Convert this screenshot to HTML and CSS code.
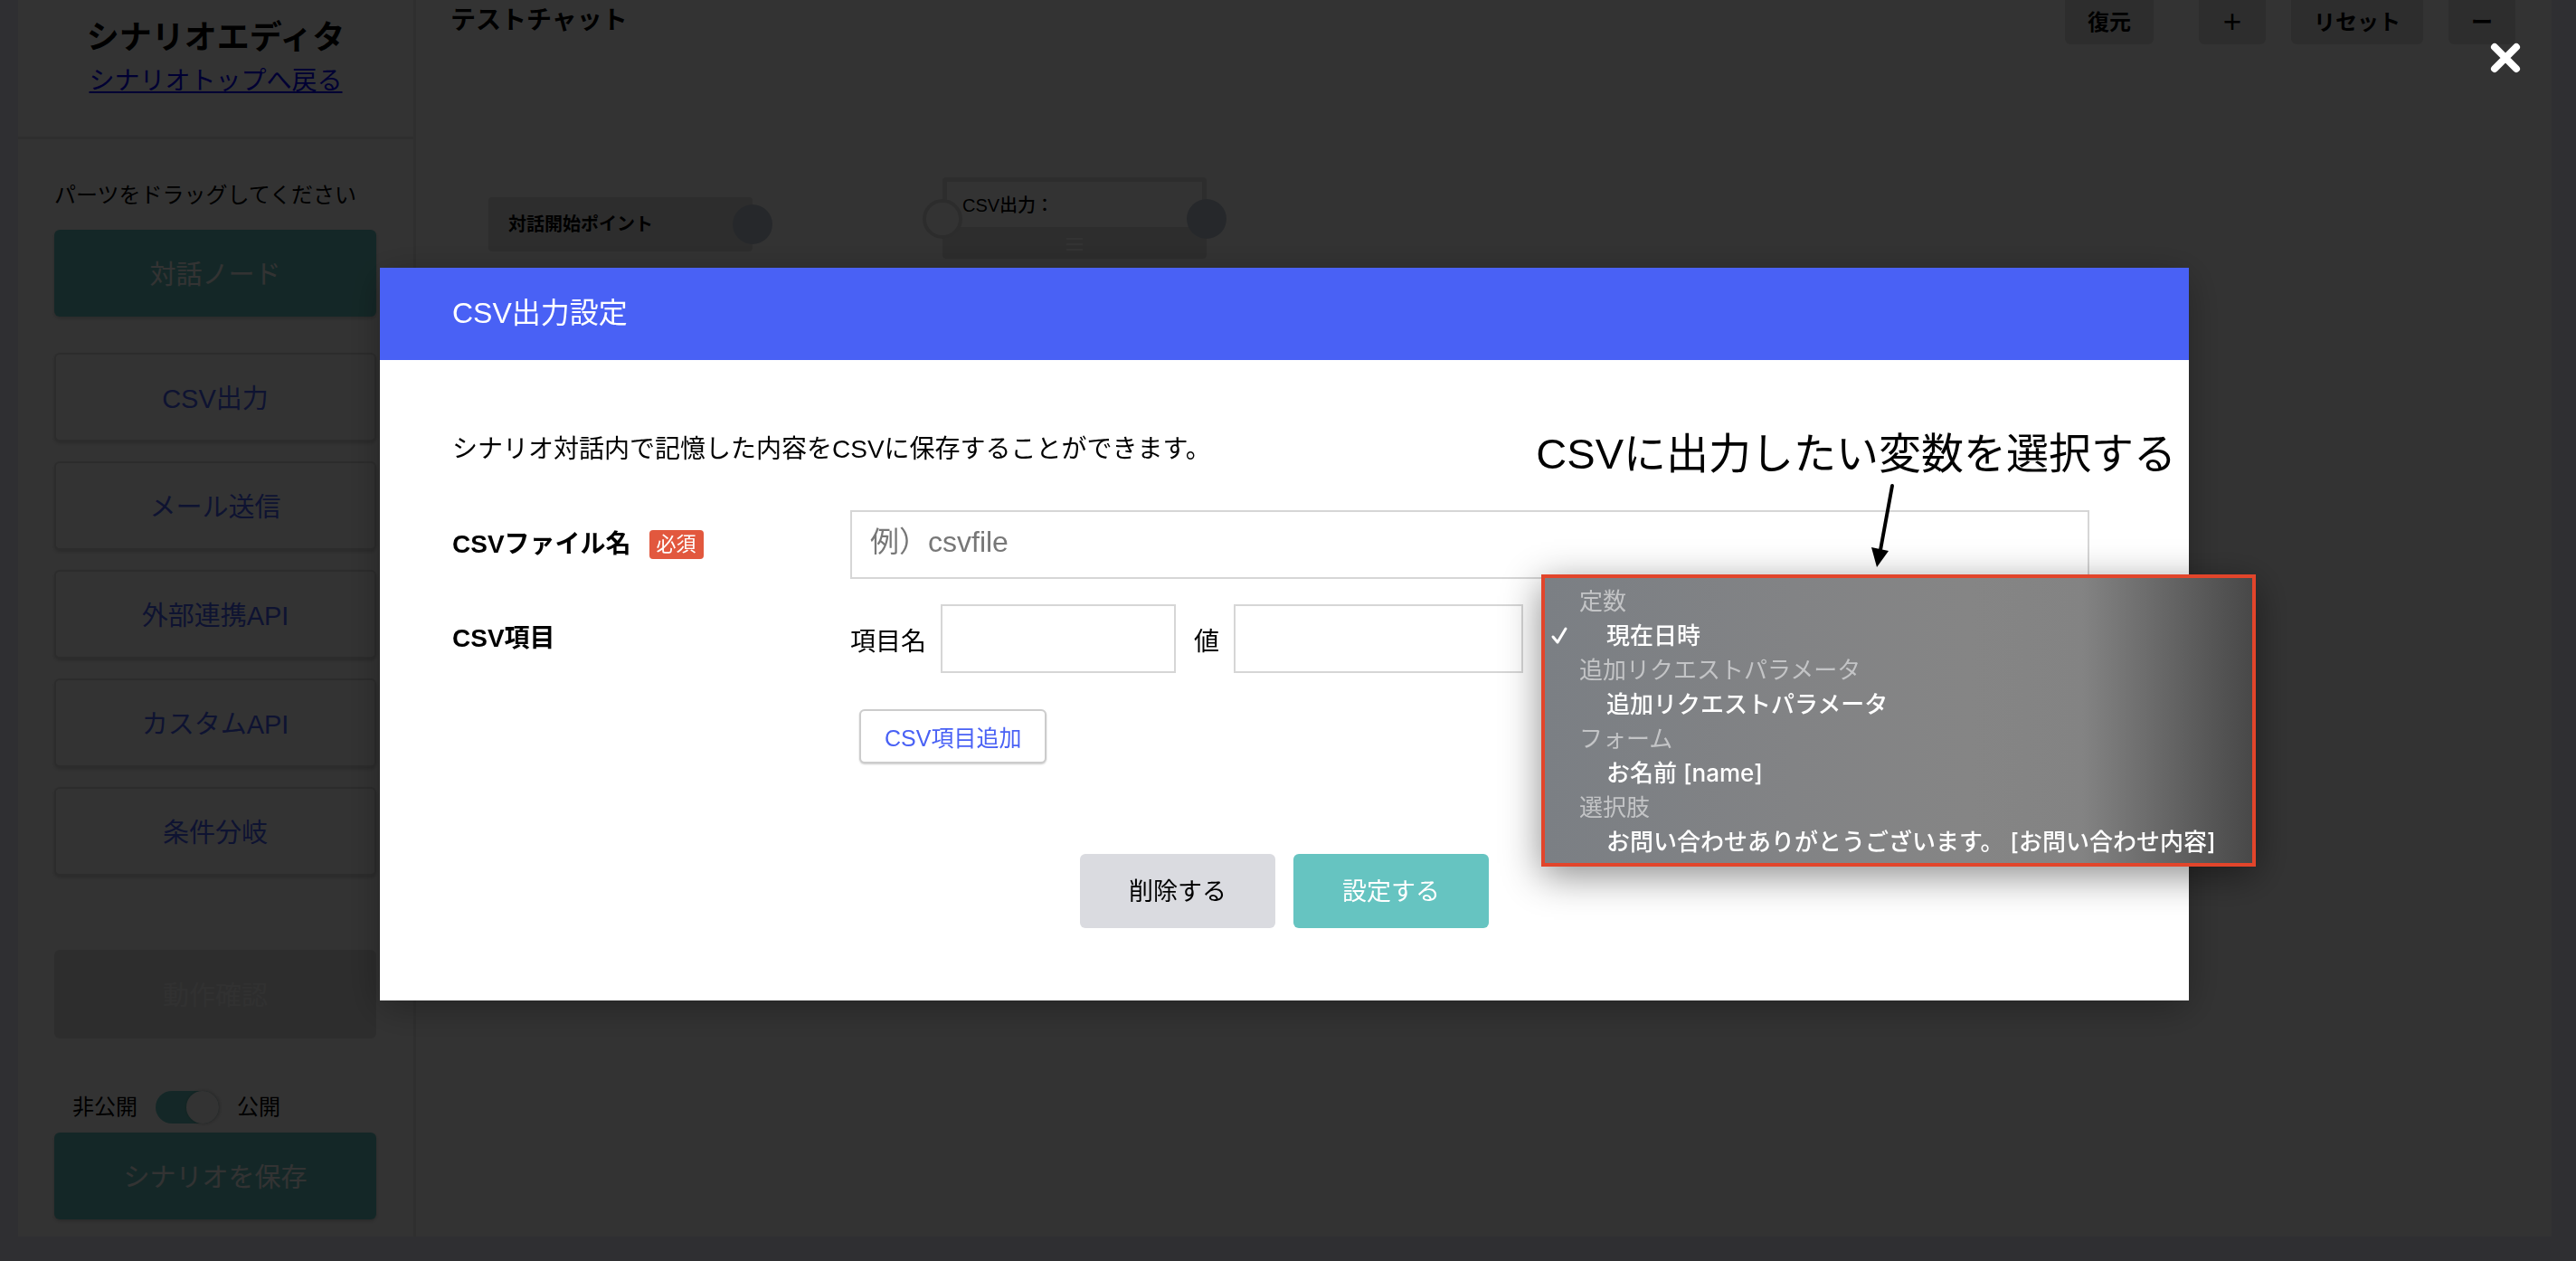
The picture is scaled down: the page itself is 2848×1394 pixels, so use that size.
FILE: index.html
```html
<!DOCTYPE html>
<html lang="ja">
<head>
<meta charset="utf-8">
<meta name="viewport" content="width=device-width, initial-scale=1">
<title>シナリオエディタ</title>
<link rel="stylesheet" href="styles.css">
</head>
<body>
<div class="app">
  <aside class="sidebar">
    <header class="sidebar-head">
      <h1 class="sidebar-title">シナリオエディタ</h1>
      <a class="sidebar-link" href="#">シナリオトップへ戻る</a>
    </header>
    <div class="sidebar-body">
      <p class="hint">パーツをドラッグしてください</p>
      <button class="part part-primary" type="button">対話ノード</button>
      <div class="part-list">
        <button class="part" type="button">CSV出力</button>
        <button class="part" type="button">メール送信</button>
        <button class="part" type="button">外部連携API</button>
        <button class="part" type="button">カスタムAPI</button>
        <button class="part" type="button">条件分岐</button>
      </div>
      <button class="part part-disabled" type="button" disabled>動作確認</button>
      <label class="publish">
        <span>非公開</span>
        <input class="switch" type="checkbox" checked>
        <span>公開</span>
      </label>
      <button class="part part-primary part-save" type="button">シナリオを保存</button>
    </div>
  </aside>
  <main class="workspace">
    <div class="toolbar">
      <h2 class="chat-name">テストチャット</h2>
      <div class="tools">
        <button class="tool tool-restore" type="button">復元</button>
        <button class="tool" type="button">＋</button>
        <button class="tool" type="button">リセット</button>
        <button class="tool" type="button">ー</button>
      </div>
    </div>
    <div class="node node-start">対話開始ポイント<span class="port port-out"></span></div>
    <div class="node node-csv">
      <span class="port port-in"></span>
      <div class="node-text">CSV出力：</div>
      <div class="node-grip">
        <svg width="22" height="18" viewBox="0 0 22 18" aria-hidden="true"><path d="M2 3h18M2 9h18M2 15h18" stroke="#fff" stroke-width="2"/></svg>
      </div>
      <span class="port port-out"></span>
    </div>
  </main>
</div>

<div class="overlay">
  <button class="close" type="button" aria-label="閉じる">
    <svg width="34" height="34" viewBox="0 0 34 34" aria-hidden="true"><path d="M5 5l24 24M29 5L5 29" stroke="#fff" stroke-width="8" stroke-linecap="round"/></svg>
  </button>
  <section class="modal" role="dialog" aria-labelledby="modal-title">
    <h2 class="modal-title" id="modal-title">CSV出力設定</h2>
    <form class="modal-body">
      <p class="lead">シナリオ対話内で記憶した内容をCSVに保存することができます。</p>
      <div class="row">
        <label class="row-label" for="file-name">CSVファイル名 <span class="badge">必須</span></label>
        <input class="text-box file-box" id="file-name" type="text" placeholder="例）csvfile">
      </div>
      <div class="row">
        <span class="row-label">CSV項目</span>
        <div class="item">
          <label class="item-label" for="item-name">項目名</label>
          <input class="text-box name-box" id="item-name" type="text">
          <label class="item-label" for="item-value">値</label>
          <input class="text-box value-box" id="item-value" type="text">
          <div class="picker">
            <select class="menu" size="8" aria-label="変数">
              <optgroup label="定数"><option selected>現在日時</option></optgroup>
              <optgroup label="追加リクエストパラメータ"><option>追加リクエストパラメータ</option></optgroup>
              <optgroup label="フォーム"><option>お名前 [name]</option></optgroup>
              <optgroup label="選択肢"><option>お問い合わせありがとうございます。 [お問い合わせ内容]</option></optgroup>
            </select>
            <svg class="menu-check" width="24" height="22" viewBox="0 0 24 22" aria-hidden="true"><path d="M4 12l5 6L18 3" fill="none" stroke="#fff" stroke-width="3" stroke-linecap="round" stroke-linejoin="round"/></svg>
          </div>
        </div>
      </div>
      <button class="add" type="button">CSV項目追加</button>
      <div class="actions">
        <button class="action" type="button">削除する</button>
        <button class="action action-main" type="submit">設定する</button>
      </div>
    </form>
    <div class="callout">
      <p class="callout-text">CSVに出力したい変数を選択する</p>
      <svg class="callout-arrow" width="40" height="96" viewBox="0 0 40 96" aria-hidden="true"><path d="M27 3L14 74" stroke="#000" stroke-width="4" stroke-linecap="round"/><path d="M4 71l19 4L10 93z"/></svg>
    </div>
  </section>
</div>
</body>
</html>
```
FILE: styles.css
```css
* {
  box-sizing: border-box;
}

body {
  margin: 0;
  background: #ebebf8;
  color: #000;
  font-family: "Liberation Sans", "Noto Sans CJK JP", sans-serif;
  font-size: 24px;
  line-height: 36px;
}

h1, h2, p {
  margin: 0;
}

button, input, select {
  font-family: inherit;
}

/* Editor behind the dialog */
.app {
  display: flex;
  margin: 0 27px 27px 20px;
  background: #fff;
}

.sidebar {
  flex: none;
  width: 440px;
  border-right: 3px solid #ebebeb;
}

.sidebar-head {
  height: 154px;
  padding-top: 18px;
  border-bottom: 3px solid #e6e6e6;
  text-align: center;
}

.sidebar-title {
  font-size: 36px;
  line-height: 48px;
}

.sidebar-link {
  display: inline-block;
  margin-top: 4px;
  color: #00f;
  font-size: 28px;
  line-height: 40px;
}

.sidebar-body {
  display: flex;
  flex-direction: column;
  padding: 44px 41px 19px 40px;
}

.hint {
  margin-bottom: 20px;
}

.part {
  width: 100%;
  height: 98px;
  padding: 0 0 3px;
  border: 2px solid #dcdcdc;
  border-radius: 6px;
  background: #fff;
  box-shadow: 0 2px 4px rgba(0, 0, 0, .2);
  color: #4961f5;
  font-size: 29px;
}

.part-primary {
  height: 96px;
  border: 0;
  background: #66c4c1;
  color: #fff;
}

.part-list {
  display: flex;
  flex-direction: column;
  gap: 22px;
  margin: 40px 0 82px;
}

.part-disabled {
  border: 0;
  background: #dfdfdf;
  box-shadow: none;
  color: #f5f5f5;
}

.publish {
  display: flex;
  align-items: center;
  gap: 20px;
  margin: 58px 0 10px 20px;
}

.switch {
  appearance: none;
  display: flex;
  justify-content: flex-end;
  width: 70px;
  height: 36px;
  margin: 0;
  border-radius: 18px;
  background: #66c4c1;
}

.switch::before {
  content: "";
  width: 36px;
  height: 36px;
  border-radius: 50%;
  background: #fff;
  box-shadow: 1px 0 4px rgba(0, 0, 0, .25);
}

.workspace {
  position: relative;
  flex: 1;
}

.toolbar {
  display: flex;
  justify-content: space-between;
  padding: 0 40px 0 38px;
}

.chat-name {
  padding-top: 5px;
  font-size: 28px;
}

.tools {
  display: flex;
  gap: 28px;
}

.tool {
  height: 49px;
  padding: 0 25px 4px;
  border: 0;
  border-radius: 0 0 6px 6px;
  background: #e0e0e0;
  color: #000;
  font-size: 24px;
  font-weight: 700;
}

.tool-restore {
  margin-right: 22px;
}

.node {
  position: absolute;
  width: 292px;
  border-radius: 4px;
  background: #e0e0e0;
  font-size: 20px;
}

.node-start {
  left: 80px;
  top: 218px;
  padding: 12px 22px;
  font-weight: 700;
}

.node-csv {
  left: 582px;
  top: 196px;
  border: 5px solid #e0e0e0;
}

.node-text {
  height: 50px;
  padding: 8px 17px;
  background: #fff;
  font-weight: 500;
}

.node-grip {
  display: flex;
  justify-content: center;
  padding: 10px 0 2px;
}

.port {
  position: absolute;
  width: 44px;
  height: 44px;
  border-radius: 50%;
}

.port-out {
  right: -22px;
  top: 8px;
  background: #bec8d4;
}

.port-in {
  left: -27px;
  top: 19px;
  border: 4px solid #dcdcdc;
  background: #fff;
}

.node-csv .port-out {
  right: -27px;
  top: 19px;
}

/* Dialog */
.overlay {
  position: fixed;
  inset: 0;
  padding: 296px 8px 0 0;
  background: rgba(0, 0, 0, .8);
}

.close {
  position: absolute;
  right: 61px;
  top: 47px;
  padding: 0;
  border: 0;
  background: none;
  line-height: 0;
}

.modal {
  position: relative;
  max-width: 2000px;
  margin: 0 auto;
  background: #fff;
  box-shadow: 0 8px 40px rgba(0, 0, 0, .3);
}

.modal-title {
  padding: 28px 80px 30px;
  background: #4961f5;
  color: #fff;
  font-size: 32px;
  font-weight: 400;
  line-height: 44px;
}

.modal-body {
  padding: 81px 80px 80px;
  font-size: 28px;
}

.lead {
  margin-bottom: 49px;
}

.row {
  display: flex;
  align-items: center;
  margin-bottom: 28px;
}

.row-label {
  display: flex;
  align-items: center;
  gap: 20px;
  width: 440px;
  font-weight: 700;
}

.badge {
  padding: 0 8px;
  border-radius: 4px;
  background: #e2583e;
  color: #fff;
  font-size: 22px;
  font-weight: 400;
  line-height: 32px;
}

.text-box {
  height: 76px;
  padding: 0 20px;
  border: 2px solid #d6d6d6;
  border-radius: 0;
  background: #fff;
  font-size: 32px;
}

.text-box::placeholder {
  color: #777;
}

.file-box {
  flex: 0 1 1370px;
  padding-bottom: 5px;
}

.item {
  display: flex;
  align-items: center;
}

.item-label {
  padding-top: 8px;
}

.name-box {
  width: 260px;
  margin: 0 20px 0 16px;
}

.value-box {
  width: 320px;
  margin: 0 20px 0 16px;
}

.picker {
  position: relative;
  align-self: stretch;
}

.menu {
  position: absolute;
  left: 0;
  top: -33px;
  width: 790px;
  height: 323px;
  padding: 5px 0 0;
  overflow: hidden;
  border: 4px solid #e2452b;
  border-radius: 0;
  outline: 0;
  background: linear-gradient(90deg, #7b7f84, #828385 35%, #858585 60%, #838383 76%, #484848);
  box-shadow: 0 10px 40px rgba(0, 0, 0, .45);
  color: #fff;
  font-family: Inter, "Noto Sans CJK JP", sans-serif;
  font-size: 26px;
  line-height: 38px;
}

.menu optgroup {
  padding: 0 0 0 36px;
  color: #c3c4c6;
  font-weight: 400;
}

.menu option,
.menu option:checked {
  min-height: 38px;
  padding: 0 0 0 32px;
  background: linear-gradient(transparent, transparent);
  background-color: transparent;
  color: #fff;
  font-weight: 500;
}

.menu-check {
  position: absolute;
  left: 9px;
  top: 24px;
}

.add {
  display: block;
  height: 60px;
  margin: 40px 0 100px 450px;
  padding: 0 26px 1px;
  border: 2px solid #ccc;
  border-radius: 6px;
  background: #fff;
  box-shadow: 0 1px 2px rgba(0, 0, 0, .2);
  color: #4961f5;
  font-size: 25px;
}

.actions {
  display: flex;
  justify-content: center;
  gap: 20px;
}

.action {
  width: 216px;
  height: 82px;
  padding: 0 0 3px;
  border: 0;
  border-radius: 6px;
  background: #dadbe0;
  color: #000;
  font-size: 27px;
}

.action-main {
  background: #66c4c1;
  color: #fff;
}

/* Explanatory note laid over the dialog */
.callout {
  position: absolute;
  right: 14px;
  top: 174px;
}

.callout-text {
  font-size: 47px;
  line-height: 64px;
}

.callout-arrow {
  display: block;
  margin-left: 367px;
}
```
